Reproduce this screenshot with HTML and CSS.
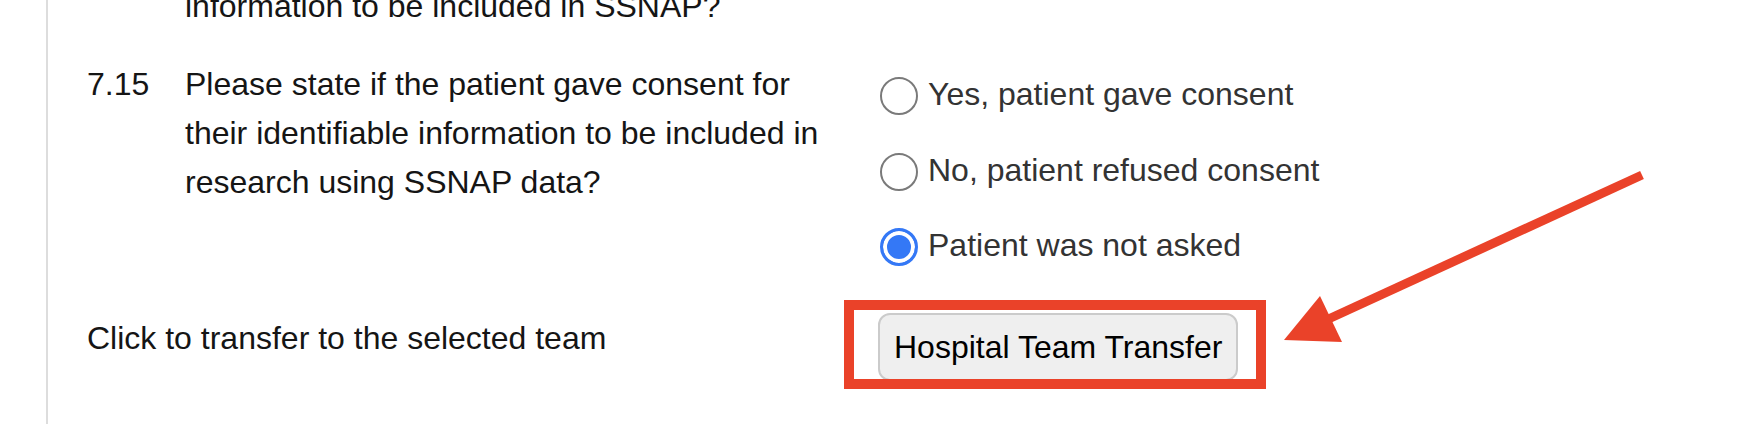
FILE: index.html
```html
<!DOCTYPE html>
<html lang="en">
<head>
<meta charset="utf-8">
<title>SSNAP – Hospital Team Transfer</title>
<link rel="stylesheet" href="styles.css">
</head>
<body>
<div class="page">
  <div class="row row-prev">
    <div class="num"></div>
    <div class="question">information to be included in SSNAP?</div>
  </div>

  <div class="row row-q">
    <div class="num">7.15</div>
    <div class="question question-main">Please state if the patient gave consent for their identifiable information to be included in research using SSNAP data?</div>
    <div class="answers">
      <label class="radio-row"><input type="radio" name="q715" class="radio"><span>Yes, patient gave consent</span></label>
      <label class="radio-row"><input type="radio" name="q715" class="radio"><span>No, patient refused consent</span></label>
      <label class="radio-row"><input type="radio" name="q715" class="radio" checked><span>Patient was not asked</span></label>
    </div>
  </div>

  <div class="row row-transfer">
    <div class="transfer-text">Click to transfer to the selected team</div>
    <div class="answers">
      <button type="button" class="btn">Hospital Team Transfer</button>
    </div>
  </div>
</div>

<div class="highlight-box"></div>
<svg class="annot-arrow" width="1756" height="424" viewBox="0 0 1756 424" xmlns="http://www.w3.org/2000/svg">
  <line x1="1642" y1="175" x2="1322" y2="322" stroke="#ea4229" stroke-width="9"/>
  <polygon points="1320,296 1284,340 1342,342" fill="#ea4229"/>
</svg>
</body>
</html>
```

FILE: styles.css
```css
html, body {
  margin: 0;
  padding: 0;
  background: #ffffff;
}

body {
  position: relative;
  width: 1756px;
  height: 424px;
  overflow: hidden;
  font-family: "Liberation Sans", Arial, Helvetica, sans-serif;
  font-size: 32px;
  line-height: 48px;
  color: #151515;
}

.page {
  margin-left: 46px;
  border-left: 2px solid #dddddd;
  padding-left: 39px;
  height: 442px;
  margin-top: -18px;
}

.row {
  display: grid;
  grid-template-columns: 98px 693px 1fr;
  align-items: start;
}

.row-q {
  margin-top: 30px;
}

.num {
  white-space: nowrap;
}

.question {
  max-width: 660px;
}

.question-main {
  line-height: 49px;
  margin-top: -0.5px;
}

.answers {
  display: flex;
  flex-direction: column;
  gap: 27.5px;
}

.row-q .answers {
  padding-top: 10px;
}

.radio-row {
  display: flex;
  align-items: center;
  height: 48px;
  color: #333333;
  cursor: pointer;
}

.radio {
  appearance: none;
  -webkit-appearance: none;
  width: 38px;
  height: 38px;
  margin: 4px 10px 0 2px;
  border: 2px solid #7a7a7a;
  border-radius: 50%;
  background: #ffffff;
  box-sizing: border-box;
  flex: none;
}

.radio:checked {
  border: 3px solid #3478f6;
  background: #3478f6;
  box-shadow: inset 0 0 0 4px #ffffff;
}

.row-transfer {
  margin-top: 44px;
}

.transfer-text {
  grid-column: 1 / 3;
  padding-top: 1px;
}

.row-transfer .answers {
  grid-column: 3;
}

.btn {
  align-self: flex-start;
  height: 68px;
  padding: 0 14px;
  border: 2px solid #cbcbcb;
  border-radius: 12px;
  background: #efefef;
  font-family: "Liberation Sans", Arial, Helvetica, sans-serif;
  font-size: 32px;
  color: #000000;
  cursor: pointer;
}

.highlight-box {
  position: absolute;
  left: 844px;
  top: 300px;
  width: 422px;
  height: 89px;
  border: 10px solid #ea4229;
  box-sizing: border-box;
  pointer-events: none;
}

.annot-arrow {
  position: absolute;
  left: 0;
  top: 0;
  pointer-events: none;
}
```
